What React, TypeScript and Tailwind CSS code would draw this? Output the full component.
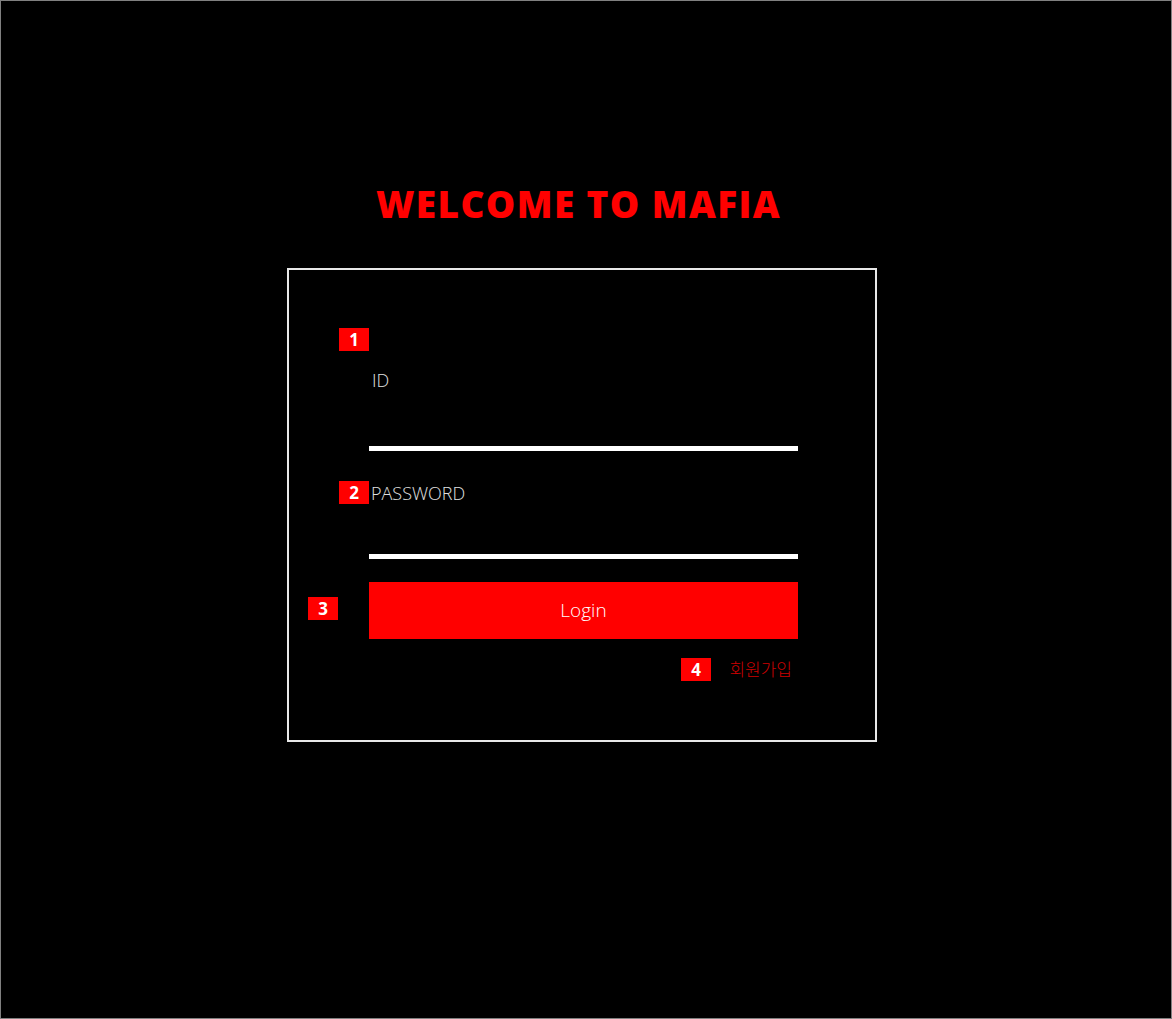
import { useState } from 'react';

const Badge = ({ n, className }: { n: string; className: string }) => (
  <span
    className={`absolute flex h-[23px] w-[30px] items-center justify-center bg-[#ff0000] text-[17px] font-bold leading-none text-white ${className}`}
  >
    {n}
  </span>
);

export default function App() {
  const [id, setId] = useState('');
  const [password, setPassword] = useState('');

  return (
    <div className="flex h-[1019px] w-full flex-col items-center border border-[#808080] bg-black font-['Open_Sans',sans-serif]">
      {/* title */}
      <h1 className="mt-[177px] mr-[15px] text-[37px] font-extrabold leading-[52px] tracking-[1.4px] text-[#ff0000]">
        WELCOME TO MAFIA
      </h1>

      {/* login box */}
      <form
        onSubmit={(e) => e.preventDefault()}
        className="relative mt-[38px] mr-[8px] flex h-[474px] w-[590px] flex-col border-2 border-[#e8e8e8] pl-[80px] pt-[98px]"
      >
        <Badge n="1" className="left-[50px] top-[58px]" />
        <Badge n="2" className="left-[50px] top-[211px]" />
        <Badge n="3" className="left-[19px] top-[327px]" />
        <Badge n="4" className="left-[392px] top-[388px]" />

        <label className="pl-[3px] text-[18px] font-light leading-[24px] text-[#e0e0e0]">ID</label>
        <input
          type="text"
          value={id}
          onChange={(e) => setId(e.target.value)}
          className="h-[59px] w-[429px] border-b-[5px] border-white bg-transparent text-white outline-none"
        />

        <label className="mt-[30px] pl-[2px] text-[18px] font-light leading-[24px] text-[#e0e0e0]">PASSWORD</label>
        <input
          type="password"
          value={password}
          onChange={(e) => setPassword(e.target.value)}
          className="h-[54px] w-[429px] border-b-[5px] border-white bg-transparent text-white outline-none"
        />

        <button
          type="submit"
          className="mt-[23px] h-[57px] w-[429px] bg-[#ff0000] text-[19px] font-light text-white"
        >
          Login
        </button>

        <div className="mt-[18px] flex w-[429px] justify-end pr-[6px]">
          <a
            href="#"
            className="font-['Noto_Sans_CJK_KR',sans-serif] text-[17px] font-light leading-[24px] text-[#cc0000]"
          >
            회원가입
          </a>
        </div>
      </form>
    </div>
  );
}
